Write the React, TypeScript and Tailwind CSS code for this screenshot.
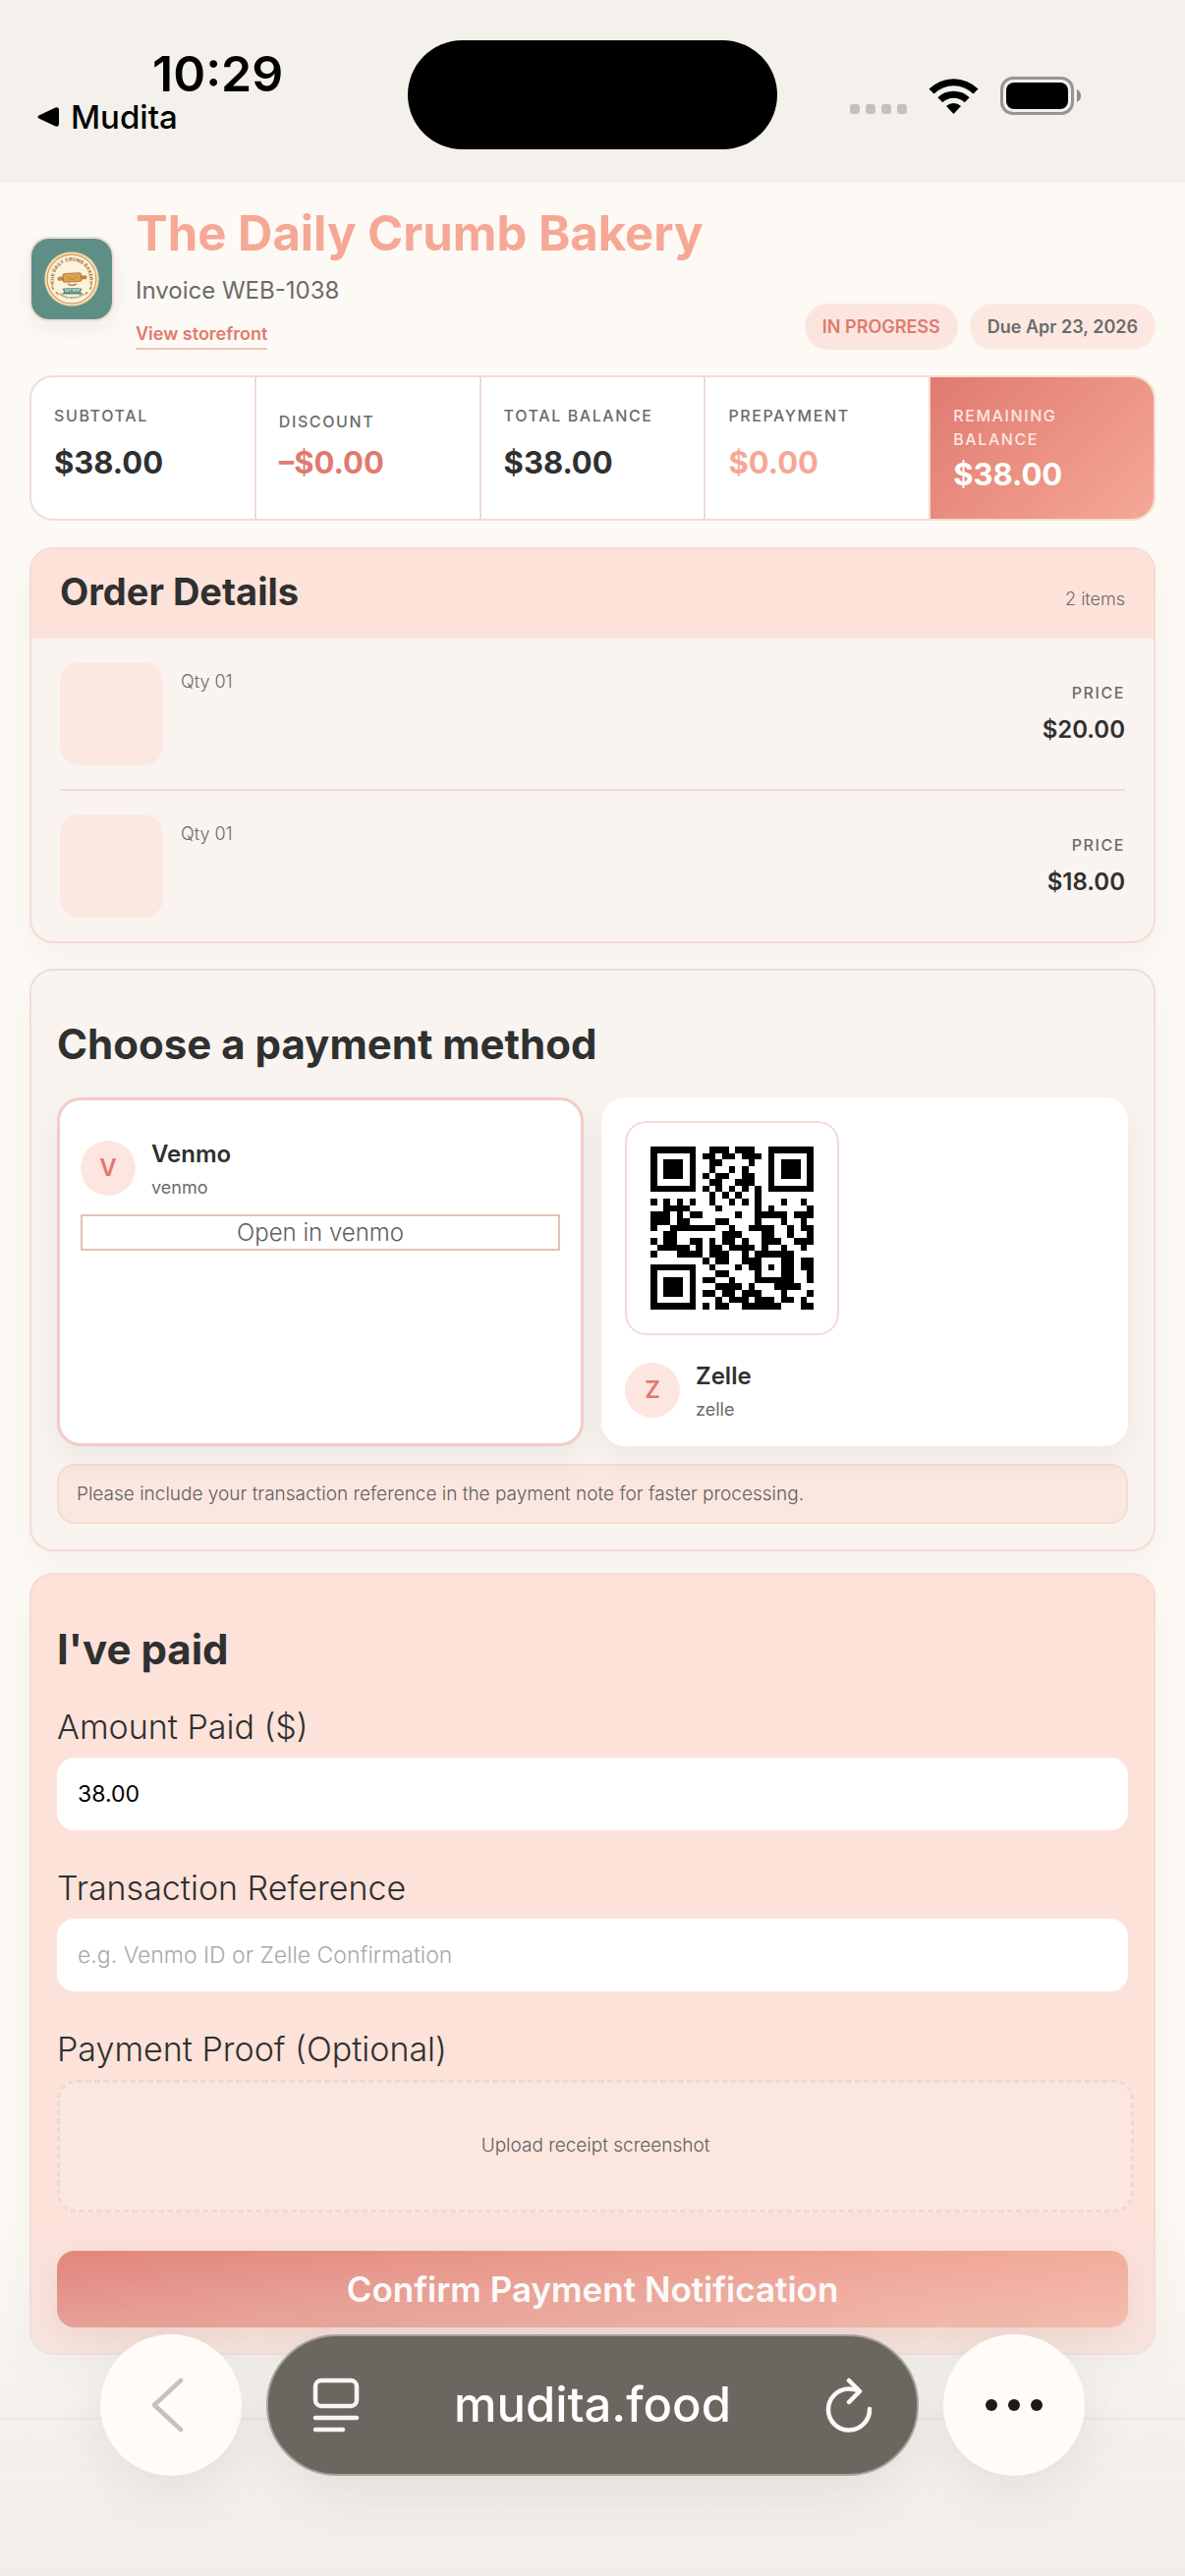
import React, { useState } from 'react';

interface SummaryCell {
  label: string;
  value: string;
  cellClass: string;
  labelClass: string;
  valueClass: string;
}

interface OrderItem {
  id: string;
  qty: string;
  price: string;
}

const summary: SummaryCell[] = [
  { label: 'Subtotal', value: '$38.00', cellClass: 'bg-white', labelClass: 'items-start text-[#6b6b6b]', valueClass: 'text-[#2f3030]' },
  { label: 'Discount', value: '–$0.00', cellClass: 'bg-white', labelClass: 'items-center text-[#6b6b6b]', valueClass: 'text-[#e07a70]' },
  { label: 'Total balance', value: '$38.00', cellClass: 'bg-white', labelClass: 'items-start text-[#6b6b6b]', valueClass: 'text-[#2f3030]' },
  { label: 'Prepayment', value: '$0.00', cellClass: 'bg-white', labelClass: 'items-start text-[#6b6b6b]', valueClass: 'text-[#f5a896]' },
  { label: 'Remaining balance', value: '$38.00', cellClass: 'bg-linear-135 from-[#e07a70] to-[#f5a896]', labelClass: 'items-start text-[#fde6e0]', valueClass: 'text-white' },
];

const items: OrderItem[] = [
  { id: '1', qty: '01', price: '$20.00' },
  { id: '2', qty: '01', price: '$18.00' },
];

const qrRows = [
  '#######..###.###..#######',
  '#.....#.##.##.###.#.....#',
  '#.###.#..##....#..#.###.#',
  '#.###.#..#..#.#...#.###.#',
  '#.###.#.#.##..##..#.###.#',
  '#.....#..##..###..#.....#',
  '#######.#.#.#.#.#.#######',
  '.........#.#.#..#........',
  '#.#.#.#..#..#.#.#...#..#.',
  '..####....#.....#.#.....#',
  '###.#.##.....#..#####.###',
  '###.##....##....#...#..#.',
  '#..#######..#..####..#.##',
  '..##.......###...##..#..#',
  '#.##..##.#.##.#..###..###',
  '.#####.#.##.####.#..#..#.',
  '#...####.###..#.######...',
  '........#.##..###...##.##',
  '#######..#...#.##.#.##.##',
  '#.....#...##....#...##..#',
  '#.###.#.##..#...######..#',
  '#.###.#...####.#...####..',
  '#.###.#.##.##.###...#...#',
  '#.....#...#.###.###.##.#.',
  '#######.#.##..######...##',
];

function QrCode() {
  return (
    <svg viewBox="0 0 25 25" className="h-[166px] w-[166px]" shapeRendering="crispEdges" role="img" aria-label="Zelle QR code">
      {qrRows.map((row, y) =>
        row.split('').map((cell, x) => (cell === '#' ? <rect key={`${x}-${y}`} x={x} y={y} width="1" height="1" /> : null))
      )}
    </svg>
  );
}

function BakeryLogo() {
  return (
    <svg viewBox="0 0 84 84" className="h-full w-full" aria-hidden="true">
      <rect width="84" height="84" fill="#5f8e85" />
      <circle cx="42" cy="42" r="28.5" fill="#e8cf9c" />
      <circle cx="42" cy="42" r="27" fill="#fbf3dc" />
      <circle cx="42" cy="42" r="25.5" fill="none" stroke="#cf9650" strokeWidth="1.2" />
      <path id="logo-top" d="M24 46a18.500 18.500 0 1 1 36 0" fill="none" />
      <path id="logo-bottom" d="M24 53a21.500 21.500 0 0 0 36 0" fill="none" />
      <text fontSize="5" fontWeight="700" fill="#a8713a" textAnchor="middle" fontFamily="Inter, sans-serif">
        <textPath href="#logo-top" startOffset="50%">THE DAILY CRUMB BAKERY</textPath>
      </text>
      <text fontSize="3" fontWeight="700" fill="#a8713a" textAnchor="middle" fontFamily="Inter, sans-serif">
        <textPath href="#logo-bottom" startOffset="50%">BAKED WITH LOVE</textPath>
      </text>
      {/* rolling pin */}
      <g transform="rotate(-3 42 41)">
        <rect x="27" y="39" width="31" height="4" rx="2" fill="#c8833c" />
        <rect x="33" y="36" width="19" height="9" rx="1.500" fill="#dfa04c" stroke="#9a6227" strokeWidth="0.7" />
        <path d="M38 40.500q1 1 2 0M45 40.500q1 1 2 0M41 42q1.500 1.200 3 0" stroke="#8a5420" strokeWidth="0.6" fill="none" />
      </g>
      <path d="M38 47q4 3 9 0M40 48.500h5" stroke="#b57a3d" strokeWidth="1.300" fill="none" />
      <path d="M32 52h21l-2 3 2 3H32l2-3z" fill="#4f8479" />
      <rect x="35" y="51.500" width="15" height="5.500" fill="#5f9588" />
      <text x="42.500" y="55.800" fontSize="3.500" fontWeight="700" fill="#dbe8df" textAnchor="middle" fontFamily="Inter, sans-serif">EST 1978</text>
      <path d="M22 46q-1 4 1 7M62 46q1 4-1 7M26 56l3 3M58 56l-3 3" stroke="#d29a50" strokeWidth="2" strokeLinecap="round" strokeDasharray="2 2.500" fill="none" />
    </svg>
  );
}

function StatusBar() {
  return (
    <header className="grid h-[186px] grid-cols-[1fr_376px_1fr] bg-[#f4f0eb] pt-[41px] text-black">
      <div className="pl-[38px]">
        <p className="pl-[117px] pt-1 text-[50px] leading-[60px] font-semibold">10:29</p>
        <button type="button" className="flex items-center gap-3 text-[33px] leading-[28px] font-medium">
          <svg viewBox="0 0 22 20" className="h-5 w-[22px]" aria-hidden="true">
            <path d="M1.500 8.500 18.500 0.600Q22 -0.500 22 3v14q0 3.500-3.500 2.400L1.500 11.500q-2-1.500 0-3z" />
          </svg>
          Mudita
        </button>
      </div>
      <div className="h-[111px] rounded-[56px] bg-black" />
      <div className="flex h-[113px] items-center justify-end pr-[106px]">
        <div className="mr-[22px] mt-[27px] flex gap-[6px]">
          <span className="size-[10px] rounded-[3px] bg-[#c5c0bc]" />
          <span className="size-[10px] rounded-[3px] bg-[#c5c0bc]" />
          <span className="size-[10px] rounded-[3px] bg-[#c5c0bc]" />
          <span className="size-[10px] rounded-[3px] bg-[#c5c0bc]" />
        </div>
        <svg viewBox="0 0 51 37" className="mr-[22px] h-[37px] w-[51px]" aria-hidden="true">
          <path d="M0.500 11.500a35.500 35.500 0 0 1 50 0l-5 5a28.500 28.500 0 0 0-40 0z" />
          <path d="M9.300 20.300a23 23 0 0 1 32.400 0l-5 5a16 16 0 0 0-22.400 0z" />
          <path d="M18 29a11 11 0 0 1 15 0l-7.500 8z" />
        </svg>
        <svg viewBox="0 0 82 39" className="h-[39px] w-[82px]" aria-hidden="true">
          <rect x="1.500" y="1.500" width="72" height="36" rx="11.500" fill="none" stroke="#979591" strokeWidth="3" />
          <rect x="6" y="6" width="63" height="27" rx="8" />
          <path d="M78 13q4 2.500 4 6.500t-4 6.500z" fill="#8a8885" />
        </svg>
      </div>
    </header>
  );
}

function Avatar({ letter }: { letter: string }) {
  return (
    <span className="flex size-14 items-center justify-center rounded-full bg-[#fde6df] text-[24px] font-semibold text-[#e07a70]">
      {letter}
    </span>
  );
}

function MethodInfo({ letter, name, handle }: { letter: string; name: string; handle: string }) {
  return (
    <div className="flex items-center gap-4">
      <Avatar letter={letter} />
      <div className="pt-[6px]">
        <h3 className="text-[24px] leading-[34px] font-semibold text-[#2f3030]">{name}</h3>
        <p className="text-[18px] leading-[34px] text-[#6b6b6b]">{handle}</p>
      </div>
    </div>
  );
}

function BrowserBar() {
  return (
    <nav className="fixed inset-x-0 bottom-0 flex h-[372px] items-start justify-center gap-[25px] bg-linear-to-b from-transparent via-[#eeeae6]/60 via-60% to-[#f1ede8] pt-[126px]">
      <button type="button" aria-label="Back" className="flex size-36 items-center justify-center rounded-full bg-[#fffcf7] shadow-[0_16px_60px_rgba(0,0,0,0.08)]">
        <svg viewBox="0 0 34 56" className="mr-2 h-14 w-[34px]" fill="none" stroke="#c6c1bd" strokeWidth="4.500" strokeLinecap="round" strokeLinejoin="round" aria-hidden="true">
          <path d="M31 3 4 28l27 25" />
        </svg>
      </button>
      <div className="flex h-36 w-[664px] items-center justify-between rounded-[72px] border-2 border-[#a5a19b] bg-[#6b6760] px-[45px] shadow-[0_16px_60px_rgba(0,0,0,0.08)]">
        <button type="button" aria-label="Page menu">
          <svg viewBox="0 0 48 56" className="h-14 w-12" fill="none" stroke="#f6f5f3" strokeWidth="4.500" strokeLinecap="round" aria-hidden="true">
            <rect x="3" y="3" width="42" height="26" rx="6" />
            <path d="M3 41h42M3 53h28" />
          </svg>
        </button>
        <span className="text-[49px] leading-[60px] font-medium text-white">mudita.food</span>
        <button type="button" aria-label="Reload">
          <svg viewBox="0 0 48 56" className="h-14 w-12" fill="none" stroke="#fdf8f4" strokeWidth="4.500" strokeLinecap="round" strokeLinejoin="round" aria-hidden="true">
            <path d="M45 32A21 21 0 1 1 24 11.500q6 0 10.500 2.500" />
            <path d="M24 3l11 11-11 11" />
          </svg>
        </button>
      </div>
      <button type="button" aria-label="More" className="flex size-36 items-center justify-center gap-[11px] rounded-full bg-[#fffcf7] shadow-[0_16px_60px_rgba(0,0,0,0.08)]">
        <span className="size-3 rounded-full bg-[#1c1b17]" />
        <span className="size-3 rounded-full bg-[#1c1b17]" />
        <span className="size-3 rounded-full bg-[#1c1b17]" />
      </button>
    </nav>
  );
}

export default function App() {
  const [amount, setAmount] = useState('38.00');
  const [reference, setReference] = useState('');

  return (
    <div className="min-h-screen bg-[#fdf9f4] font-['Inter','Liberation_Sans',sans-serif] text-[#2f3030]">
      <StatusBar />

      <main className="px-[30px] pt-[26px] pb-16">
        {/* Invoice header */}
        <section className="flex items-end justify-between">
          <div className="flex items-center gap-[22px]">
            <div className="size-[86px] overflow-hidden rounded-[20px] border-2 border-[#f0dcd3] shadow-[0_8px_24px_rgba(0,0,0,0.06)]">
              <BakeryLogo />
            </div>
            <div>
              <h1 className="text-[49px] leading-[52px] font-bold text-[#f5a896]">The Daily Crumb Bakery</h1>
              <p className="mt-3 text-[24px] leading-10 text-[#6b6b6b]">Invoice WEB-1038</p>
              <a href="#storefront" className="mt-[10px] inline-block border-b-2 border-[#f3c3bb] text-[18px] leading-7 font-semibold text-[#e07a70]">
                View storefront
              </a>
            </div>
          </div>
          <div className="flex gap-3">
            <span className="rounded-full bg-[#fbe6df] px-[18px] text-[18px] leading-[47px] font-semibold text-[#e07a70]">IN PROGRESS</span>
            <span className="rounded-full bg-[#fde8e1] px-[18px] text-[18px] leading-[47px] font-semibold text-[#6b6b6b]">Due Apr 23, 2026</span>
          </div>
        </section>

        {/* Totals */}
        <section className="mt-[26px] grid grid-cols-5 gap-[2px] overflow-hidden rounded-[24px] border-2 border-[#f2dcd4] bg-[#f2dcd4]">
          {summary.map((cell) => (
            <div key={cell.label} className={`h-36 px-[23px] pt-[27px] ${cell.cellClass}`}>
              <p className={`flex min-h-9 text-[16px] leading-6 font-medium tracking-widest uppercase ${cell.labelClass}`}>{cell.label}</p>
              <p className={`mt-1 text-[31px] leading-10 font-bold ${cell.valueClass}`}>{cell.value}</p>
            </div>
          ))}
        </section>

        {/* Order details */}
        <section className="mt-[27px] overflow-hidden rounded-[24px] border-2 border-[#f2dcd4] bg-[#f9f4f0] shadow-[0_16px_40px_rgba(0,0,0,0.04)]">
          <div className="flex items-baseline justify-between bg-[#fde2da] px-[29px] pt-[17px] pb-[22px]">
            <h2 className="text-[38px] leading-[52px] font-bold">Order Details</h2>
            <span className="text-[18px] font-light text-[#6b6b6b]">2 items</span>
          </div>
          <ul className="px-[29px]">
            {items.map((item) => (
              <li key={item.id} className="flex items-center border-b-2 border-[#f2dcd4] py-6 last:border-b-0">
                <div className="size-[105px] rounded-[20px] bg-[#fde8e1]" />
                <p className="ml-[18px] self-start pt-[6px] text-[18px] leading-7 font-light text-[#6b6b6b]">Qty {item.qty}</p>
                <div className="ml-auto text-right">
                  <p className="text-[16px] leading-7 font-medium tracking-widest text-[#6b6b6b]">PRICE</p>
                  <p className="mt-1 text-[24px] leading-10 font-semibold">{item.price}</p>
                </div>
              </li>
            ))}
          </ul>
        </section>

        {/* Payment method */}
        <section className="mt-[26px] rounded-[24px] border-2 border-[#f2dcd4] bg-[#f9f4f0] px-[26px] pt-[49px] pb-[26px] shadow-[0_16px_40px_rgba(0,0,0,0.04)]">
          <h2 className="text-[42px] leading-[52px] font-bold">Choose a payment method</h2>
          <div className="mt-7 grid grid-cols-2 gap-[18px]">
            <div className="rounded-[24px] border-3 border-[#f6cac6] bg-white px-[21px] pt-8 shadow-[0_12px_32px_rgba(0,0,0,0.06)]">
              <MethodInfo letter="V" name="Venmo" handle="venmo" />
              <button type="button" className="mt-[10px] w-full border-2 border-[#dfc3b7] text-[24px] leading-[33px] font-light text-[#5f6060]">
                Open in venmo
              </button>
            </div>
            <div className="rounded-[24px] bg-white px-6 pt-6 pb-5 shadow-[0_12px_32px_rgba(0,0,0,0.06)]">
              <div className="mb-[19px] w-fit rounded-[22px] border-2 border-[#f2dcd4] p-6">
                <QrCode />
              </div>
              <MethodInfo letter="Z" name="Zelle" handle="zelle" />
            </div>
          </div>
          <p className="mt-[18px] rounded-[18px] border-2 border-[#f2dcd4] bg-[#fce7e0] px-[18px] text-[19px] leading-[57px] font-light text-[#5f6060]">
            Please include your transaction reference in the payment note for faster processing.
          </p>
        </section>

        {/* Payment notification */}
        <section className="mt-[22px] rounded-[24px] border-2 border-[#f2dcd4] bg-[#fde2da] px-[26px] pt-[50px] pb-[26px] shadow-[0_16px_40px_rgba(0,0,0,0.04)]">
          <h2 className="text-[42px] leading-[52px] font-bold">I've paid</h2>
          <form onSubmit={(e) => e.preventDefault()}>
            <label htmlFor="amount" className="mt-[30px] block text-[34px] leading-[46px] font-light">Amount Paid ($)</label>
            <input
              id="amount"
              type="text"
              value={amount}
              onChange={(e) => setAmount(e.target.value)}
              className="mt-2 block h-[74px] w-full rounded-[18px] bg-white px-[21px] text-[23px] text-black focus:outline-none"
            />

            <label htmlFor="reference" className="mt-9 block text-[34px] leading-[46px] font-light">Transaction Reference</label>
            <input
              id="reference"
              type="text"
              placeholder="e.g. Venmo ID or Zelle Confirmation"
              value={reference}
              onChange={(e) => setReference(e.target.value)}
              className="mt-2 block h-[74px] w-full rounded-[18px] bg-white px-[21px] text-[23px] font-light text-black placeholder:text-[#a9a9a9] focus:outline-none"
            />

            <label htmlFor="proof" className="mt-9 block text-[34px] leading-[46px] font-light">Payment Proof (Optional)</label>
            <label
              htmlFor="proof"
              className="mt-2 -mr-[6px] flex h-[135px] cursor-pointer items-center justify-center rounded-[20px] border-3 border-dashed border-[#eedad0] bg-[#fce7df] text-[19px] font-light text-[#5f6060]"
            >
              Upload receipt screenshot
            </label>
            <input id="proof" type="file" className="sr-only" />

            <button
              type="submit"
              className="mt-[39px] block h-[78px] w-full rounded-[18px] bg-linear-135 from-[#e07a70] to-[#f5a896] text-[35px] font-semibold text-white shadow-[0_12px_32px_rgba(160,80,70,0.15)]"
            >
              Confirm Payment Notification
            </button>
          </form>
        </section>
      </main>

      <footer className="h-40 border-t-2 border-[#f3e3dd]" />

      <BrowserBar />
    </div>
  );
}
